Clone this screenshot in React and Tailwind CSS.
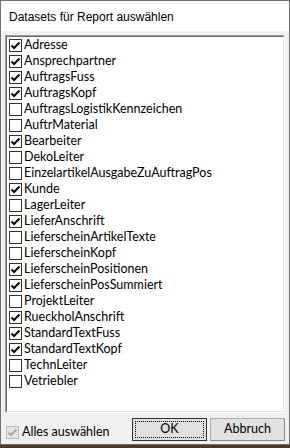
import React from "react";

const items = [
  ["Adresse", true],
  ["Ansprechpartner", true],
  ["AuftragsFuss", true],
  ["AuftragsKopf", true],
  ["AuftragsLogistikKennzeichen", false],
  ["AuftrMaterial", false],
  ["Bearbeiter", true],
  ["DekoLeiter", false],
  ["EinzelartikelAusgabeZuAuftragPos", false],
  ["Kunde", true],
  ["LagerLeiter", false],
  ["LieferAnschrift", true],
  ["LieferscheinArtikelTexte", false],
  ["LieferscheinKopf", false],
  ["LieferscheinPositionen", true],
  ["LieferscheinPosSummiert", true],
  ["ProjektLeiter", false],
  ["RueckholAnschrift", true],
  ["StandardTextFuss", true],
  ["StandardTextKopf", true],
  ["TechnLeiter", false],
  ["Vetriebler", false],
];

function Check({ checked, disabled }) {
  return (
    <div
      className={
        "w-[13px] h-[13px] shrink-0 border flex items-center justify-center " +
        (disabled ? "border-[#bcbcbc] bg-[#e6e6e6]" : "border-[#333333] bg-white")
      }
    >
      {checked && (
        <svg width="11" height="11" viewBox="0 0 11 11">
          <path
            d="M1.5 5.5 L4 8 L9.5 2.5"
            fill="none"
            stroke={disabled ? "#a8a8a8" : "#000"}
            strokeWidth="2"
          />
        </svg>
      )}
    </div>
  );
}

export default function App() {
  return (
    <div
      className="w-[290px] h-[448px] bg-[#4a3a28]"
      style={{ fontFamily: '"Liberation Sans", Arial, sans-serif' }}
    >
      <div className="h-[445px] border border-[#6f6f6f] bg-[#f0f0f0] flex flex-col">
        <div className="h-[30px] bg-white flex items-center pl-[8px] text-[12px] text-black pt-[2px]">
          Datasets für Report auswählen
        </div>
        <div className="px-[4px] pt-[4px]">
          <div className="h-[378px] border-t border-l border-[#a0a0a0] border-r border-r-white border-b border-b-white">
            <div className="h-full border-t border-l border-[#696969] border-r border-r-[#e3e3e3] border-b border-b-[#e3e3e3] bg-white">
              {items.map(([name, checked]) => (
                <div
                  key={name}
                  className="h-[16px] flex items-center pl-[2px] gap-[2px] text-[12.5px] text-black font-['Lato',sans-serif]"
                >
                  <Check checked={checked} />
                  <span className="leading-[16px]">{name}</span>
                </div>
              ))}
            </div>
          </div>
        </div>
        <div className="flex items-start pl-[5px] pr-[4px] pt-[5px] font-['Lato',sans-serif] text-[12.5px]">
          <div className="flex items-center gap-[3px] mt-[5px] text-black">
            <Check checked disabled />
            <span>Alles auswählen</span>
          </div>
          <div className="ml-auto flex gap-[3px]">
            <div className="w-[75px] h-[23px] border border-[#333333] bg-[#e1e1e1] p-[2px]">
              <div className="w-full h-full border border-dotted border-black flex items-center justify-center text-black">
                OK
              </div>
            </div>
            <div className="w-[75px] h-[23px] border border-[#adadad] border-r-[#8a8a8a] border-b-[#8a8a8a] bg-[#e1e1e1] flex items-center justify-center text-black">
              Abbruch
            </div>
          </div>
        </div>
      </div>
    </div>
  );
}
